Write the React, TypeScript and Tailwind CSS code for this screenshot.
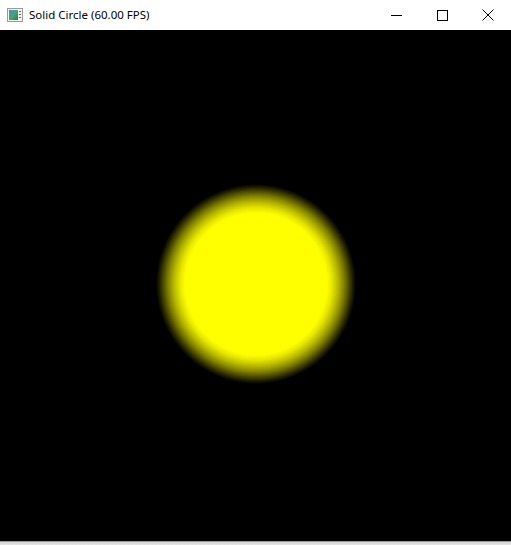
import React from 'react';

const AppIcon: React.FC = () => (
  <svg width="16" height="14" viewBox="0 0 16 14" className="shrink-0">
    <defs>
      <linearGradient id="ico" x1="0" y1="0" x2="1" y2="1">
        <stop offset="0" stopColor="#3f8fd0" />
        <stop offset="0.5" stopColor="#4aa27a" />
        <stop offset="1" stopColor="#2f7a3a" />
      </linearGradient>
    </defs>
    <rect x="0.5" y="0.5" width="15" height="13" fill="#f4f4f4" stroke="#9a9a9a" />
    <rect x="2" y="2" width="9" height="10" fill="url(#ico)" />
    <rect x="12" y="3" width="2" height="1" fill="#6a6a6a" />
    <rect x="12" y="6" width="2" height="1" fill="#6a6a6a" />
    <rect x="12" y="9" width="2" height="1" fill="#6a6a6a" />
  </svg>
);

const App: React.FC = () => {
  return (
    <div className="w-[511px] h-[545px] flex flex-col bg-white overflow-hidden" style={{ fontFamily: '"Noto Sans", "Open Sans", sans-serif' }}>
      {/* title bar */}
      <div className="h-[30px] flex items-center bg-white shrink-0">
        <div className="flex items-center gap-[6px] pl-[7px] flex-1">
          <AppIcon />
          <span className="text-[11.5px] text-black leading-none">Solid Circle (60.00 FPS)</span>
        </div>
        <div className="flex h-full">
          <div className="w-[46px] h-full flex items-center justify-center">
            <div className="w-[11px] h-px bg-black" />
          </div>
          <div className="w-[46px] h-full flex items-center justify-center">
            <div className="w-[11px] h-[11px] border border-black" />
          </div>
          <div className="w-[46px] h-full flex items-center justify-center">
            <svg width="12" height="12" viewBox="0 0 12 12">
              <path d="M0.5 0.5L11.5 11.5M11.5 0.5L0.5 11.5" stroke="#000" strokeWidth="1" fill="none" />
            </svg>
          </div>
        </div>
      </div>

      {/* canvas */}
      <div className="h-[511px] bg-black flex items-center justify-center shrink-0">
        <div className="w-[200px] h-[200px] rounded-full mb-[3px] bg-[radial-gradient(circle_closest-side,#ffff00_0,#ffff00_71%,#e6e600_76%,#b8b800_82%,#808000_88%,#484800_93%,#1c1c00_97%,#000000_100%)]" />
      </div>

      {/* window bottom edge */}
      <div className="h-px bg-[#9c9c9c] shrink-0" />
      <div className="flex-1 bg-gradient-to-b from-[#d4d4d4] to-[#e6e6e6]" />
    </div>
  );
};

export default App;
